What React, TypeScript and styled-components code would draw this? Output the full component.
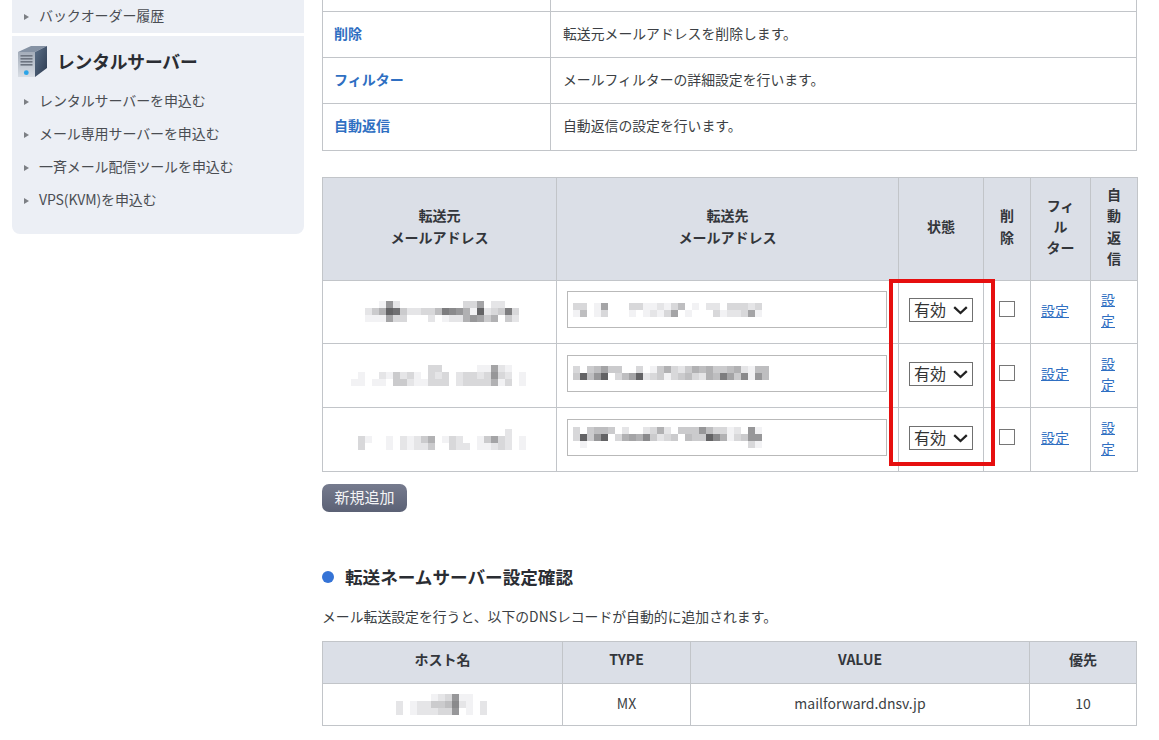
import React from "react";
import styled, { createGlobalStyle } from "styled-components";

const Global = createGlobalStyle`
  html, body { margin: 0; padding: 0; background: #fff; overflow: hidden; }
  body { font-family: "Noto Sans CJK JP", "Noto Sans", sans-serif; color: #333; font-size: 14px; }
`;

const Page = styled.div`
  display: flex;
  align-items: flex-start;
  width: 1159px;
  height: 740px;
  padding-left: 12px;
  box-sizing: border-box;
  overflow: hidden;
`;

const Sidebar = styled.aside`
  width: 292px;
  flex: none;
  margin-right: 18px;
  display: flex;
  flex-direction: column;
  gap: 3px;
`;

const SideTopCard = styled.div`
  background: #eceff5;
  height: 33px;
  display: flex;
  align-items: center;
`;

const SideCard = styled.div`
  background: #eceff5;
  height: 198px;
  border-radius: 0 0 8px 8px;
  box-sizing: border-box;
  padding-top: 9px;
`;

const SideTitle = styled.h2`
  display: flex;
  align-items: center;
  gap: 9px;
  margin: 0 0 7px 6px;
  height: 33px;
  font-size: 17.8px;
  line-height: 33px;
  font-weight: 700;
  color: #2a2d33;
  letter-spacing: -0.2px;
`;

const SideItem = styled.div`
  display: flex;
  align-items: center;
  height: 33px;
  box-sizing: border-box;
  padding: 0 0 4px 12px;
  font-size: 14px;
  color: #4a4d52;
  gap: 9px;
  letter-spacing: -0.1px;
`;

const Bullet = styled.span`
  width: 0;
  height: 0;
  border-left: 5px solid #7c7f84;
  border-top: 3px solid transparent;
  border-bottom: 3px solid transparent;
  margin: 4px 1px 0 0;
`;

const Main = styled.main`
  width: 815px;
  flex: none;
`;

const Table = styled.table<{ $mt?: number }>`
  width: 815px;
  border-collapse: collapse;
  table-layout: fixed;
  margin-top: ${(p) => p.$mt ?? 0}px;
  & td, & th { border: 1px solid #c2c5c9; }
`;

const HeadCell = styled.th`
  background: #dbdfe7;
  font-weight: 700;
  font-size: 14px;
  line-height: 21.3px;
  color: #33363b;
  padding: 0 11px 4px;
  text-align: center;
  vertical-align: middle;
`;

const KeyCell = styled.td`
  padding: 0 11px 3px;
  font-weight: 700;
  color: #2f6fc2;
  font-size: 14px;
`;

const DescCell = styled.td`
  padding: 0 12px 3px;
  color: #3c3f44;
  font-size: 13.85px;
`;

const CutRow = styled.tr`
  height: 11px;
  & td { border-top: none; padding: 0; }
`;

const InfoRow = styled.tr<{ $h: number }>`
  height: ${(p) => p.$h}px;
`;

const CenterCell = styled.td`
  text-align: center;
  vertical-align: middle;
  padding: 0 0 3px;
  font-size: 14px;
  color: #3c3f44;
`;

const MosaicCell = styled.td`
  vertical-align: middle;
  padding: 0;
`;

const MosaicBox = styled.div<{ $ml: number }>`
  margin-left: ${(p) => p.$ml}px;
  line-height: 0;
`;

const InputCell = styled.td`
  padding: 0 10px;
  vertical-align: middle;
`;

const FakeInput = styled.div`
  height: 37px;
  width: 320px;
  margin-bottom: 4px;
  box-sizing: border-box;
  border: 1px solid #b9b9b9;
  display: flex;
  align-items: center;
  padding-left: 5px;
`;

const chevron =
  "data:image/svg+xml," +
  encodeURIComponent(
    '<svg xmlns="http://www.w3.org/2000/svg" width="15" height="9"><path d="M1.2 1.2 L7.5 7 L13.8 1.2" fill="none" stroke="#222" stroke-width="2.3"/></svg>'
  );

const Pick = styled.select`
  appearance: none;
  display: block;
  margin: 0 auto;
  width: 64px;
  height: 24px;
  box-sizing: border-box;
  font-family: inherit;
  font-size: 16px;
  line-height: 20px;
  color: #333;
  background: #fff url("${chevron}") no-repeat 43px 7px;
  border: 1px solid #707070;
  border-radius: 0;
  padding: 0 0 3px 4px;
`;

const Check = styled.input`
  appearance: none;
  display: block;
  width: 16px;
  height: 16px;
  margin: 0 auto 2px;
  background: #fff;
  border: 1px solid #767676;
  box-sizing: border-box;
`;

const LinkCell = styled.td`
  padding: 0 10px 3px;
  vertical-align: middle;
  line-height: 21px;
`;

const SetLink = styled.a`
  color: #2f6fc2;
  font-size: 14px;
  text-decoration: underline;
`;

const Forward = styled.div`
  position: relative;
`;

const Highlight = styled.div`
  position: absolute;
  left: 567px;
  top: 102px;
  width: 106px;
  height: 187px;
  box-sizing: border-box;
  border: 4px solid #e60f0f;
  pointer-events: none;
`;

const AddButton = styled.button`
  display: block;
  margin-top: 12px;
  width: 85px;
  height: 28px;
  padding: 0 0 2px;
  border: none;
  border-radius: 7px;
  background: linear-gradient(#767b8e, #5b6175);
  color: #f4f4f6;
  font-family: inherit;
  font-size: 15px;
`;

const SectionTitle = styled.h3`
  display: flex;
  align-items: center;
  gap: 11px;
  margin: 50px 0 0;
  height: 30px;
  font-size: 17.6px;
  line-height: 30px;
  font-weight: 700;
  color: #2a2d33;
`;

const Dot = styled.span`
  width: 12px;
  height: 12px;
  border-radius: 50%;
  background: #3573d6;
`;

const Lead = styled.p`
  margin: 12px 0 0;
  height: 24px;
  line-height: 24px;
  font-size: 13.85px;
  color: #3c3f44;
`;

const Mosaic = ({ rows, cw = 7, ch = 7 }: { rows: string[]; cw?: number; ch?: number }) => {
  const w = Math.max(...rows.map((r) => r.length));
  return (
    <svg width={w * cw} height={rows.length * ch}>
      {rows.flatMap((r, y) =>
        r.split("").map((c, x) => {
          if (c === "f") return null;
          const v = 60 + Math.round((parseInt(c, 16) / 15) * 195);
          return <rect key={`${x}-${y}`} x={x * cw} y={y * ch} width={cw} height={ch} fill={`rgb(${v},${v},${v + 2})`} />;
        })
      )}
    </svg>
  );
};

const ServerIcon = () => (
  <svg width="30" height="33" viewBox="0 0 30 33">
    <defs>
      <linearGradient id="sf" x1="0" y1="0" x2="0" y2="1">
        <stop offset="0" stopColor="#a4adba" />
        <stop offset="1" stopColor="#d9dee5" />
      </linearGradient>
      <linearGradient id="ss" x1="0" y1="0" x2="1" y2="1">
        <stop offset="0" stopColor="#5c7088" />
        <stop offset="1" stopColor="#2c3a50" />
      </linearGradient>
    </defs>
    <polygon points="0,7 17,7 29,1 13,1" fill="#8592a4" />
    <polygon points="17,7 29,1 29,23 17,32" fill="url(#ss)" />
    <polygon points="0,7 17,7 17,32 0,32" fill="url(#sf)" />
    {[10, 13, 16, 19].map((y) => (
      <rect key={y} x="2.5" y={y} width="12" height="1.6" fill="#6d7480" />
    ))}
    <circle cx="8.3" cy="27.7" r="2.4" fill="#2aa4e8" />
  </svg>
);

const EMAILS = [
  ["ffe7dfffffffffcc8fddff", "db934bddcca5679e3dcb5c", "eee8ccfffdfedd978b9fbd"],
  ["fffffffffffccfffffee8deff", "feffdebdcefcdcfdccdc7cdfe", "eefeefbbdeecccfdcccc9ecfe"],
  ["fffffffffffffffffffffdff", "ceffefdedb9fecdffeb8cdfe", "cfffefdeddbffcddfeedcdfe"],
];
const EMAIL_LEFT = [42, 28, 35];
const INPUTS = [
  ["ccfe8fffcceedecafefddfcccdc", "eafecfffefedec8fefffceddc8e"],
  ["cfba8bbffcfeb9cdb9a9bba9deaa", "b3a73fca83dcbecbacd9a58b6e7a"],
  ["cfbaabfdffdc9dfbbb7accedf7e", "c3b73fc9896bdcbfabb369ecb77", "fefffffffffffffffffffffffce"],
];
const HOST = ["fffffedc7eeff", "dfeddbba6defd", "dfedddcc7fefd"];

const rows = [0, 1, 2];
const heights = [63, 64, 64];

export default function App() {
  return (
    <>
      <Global />
      <Page>
        <Sidebar>
          <SideTopCard>
            <SideItem>
              <Bullet />
              バックオーダー履歴
            </SideItem>
          </SideTopCard>
          <SideCard>
            <SideTitle>
              <ServerIcon />
              レンタルサーバー
            </SideTitle>
            <SideItem><Bullet />レンタルサーバーを申込む</SideItem>
            <SideItem><Bullet />メール専用サーバーを申込む</SideItem>
            <SideItem><Bullet />一斉メール配信ツールを申込む</SideItem>
            <SideItem><Bullet />VPS(KVM)を申込む</SideItem>
          </SideCard>
        </Sidebar>
        <Main>
          <Table>
            <colgroup>
              <col width="228" />
              <col />
            </colgroup>
            <tbody>
              <CutRow><td /><td /></CutRow>
              <InfoRow $h={46}><KeyCell>削除</KeyCell><DescCell>転送元メールアドレスを削除します。</DescCell></InfoRow>
              <InfoRow $h={46}><KeyCell>フィルター</KeyCell><DescCell>メールフィルターの詳細設定を行います。</DescCell></InfoRow>
              <InfoRow $h={47}><KeyCell>自動返信</KeyCell><DescCell>自動返信の設定を行います。</DescCell></InfoRow>
            </tbody>
          </Table>
          <Forward>
            <Table $mt={26}>
              <colgroup>
                <col width="234" />
                <col width="342" />
                <col width="85" />
                <col width="47" />
                <col width="60" />
                <col width="47" />
              </colgroup>
              <thead>
                <InfoRow $h={103}>
                  <HeadCell>転送元<br />メールアドレス</HeadCell>
                  <HeadCell>転送先<br />メールアドレス</HeadCell>
                  <HeadCell>状態</HeadCell>
                  <HeadCell>削除</HeadCell>
                  <HeadCell>フィ<br />ル<br />ター</HeadCell>
                  <HeadCell>自動返信</HeadCell>
                </InfoRow>
              </thead>
              <tbody>
                {rows.map((i) => (
                  <InfoRow key={i} $h={heights[i]}>
                    <MosaicCell><MosaicBox $ml={EMAIL_LEFT[i]}><Mosaic rows={EMAILS[i]} /></MosaicBox></MosaicCell>
                    <InputCell>
                      <FakeInput><Mosaic rows={INPUTS[i]} /></FakeInput>
                    </InputCell>
                    <CenterCell>
                      <Pick defaultValue="1"><option value="1">有効</option><option value="0">無効</option></Pick>
                    </CenterCell>
                    <CenterCell><Check type="checkbox" /></CenterCell>
                    <LinkCell><SetLink href="#">設定</SetLink></LinkCell>
                    <LinkCell><SetLink href="#">設定</SetLink></LinkCell>
                  </InfoRow>
                ))}
              </tbody>
            </Table>
            <Highlight />
          </Forward>
          <AddButton>新規追加</AddButton>
          <SectionTitle><Dot />転送ネームサーバー設定確認</SectionTitle>
          <Lead>メール転送設定を行うと、以下のDNSレコードが自動的に追加されます。</Lead>
          <Table $mt={13}>
            <colgroup>
              <col width="240" />
              <col width="128" />
              <col width="339" />
              <col />
            </colgroup>
            <thead>
              <InfoRow $h={42}>
                <HeadCell>ホスト名</HeadCell>
                <HeadCell>TYPE</HeadCell>
                <HeadCell>VALUE</HeadCell>
                <HeadCell>優先</HeadCell>
              </InfoRow>
            </thead>
            <tbody>
              <InfoRow $h={42}>
                <MosaicCell><MosaicBox $ml={73}><Mosaic rows={HOST} /></MosaicBox></MosaicCell>
                <CenterCell>MX</CenterCell>
                <CenterCell>mailforward.dnsv.jp</CenterCell>
                <CenterCell>10</CenterCell>
              </InfoRow>
            </tbody>
          </Table>
        </Main>
      </Page>
    </>
  );
}
